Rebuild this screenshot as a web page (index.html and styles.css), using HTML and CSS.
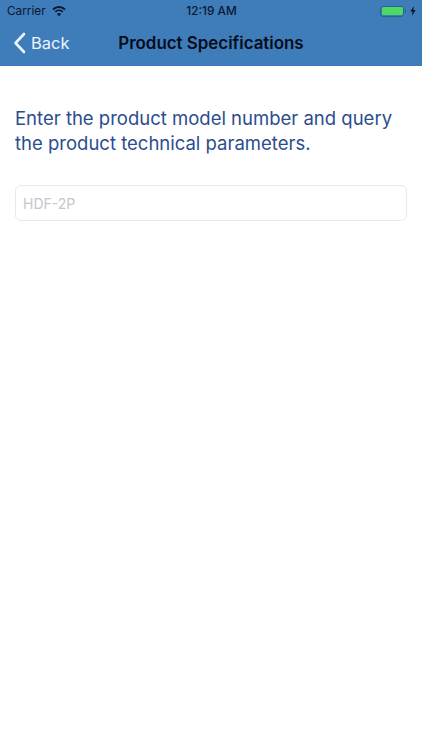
FILE: index.html
```html
<!DOCTYPE html>
<html lang="en">
<head>
<meta charset="utf-8">
<title>Product Specifications</title>
<link rel="stylesheet" href="styles.css">
</head>
<body>
<header class="topbar">
  <div class="status">
    <div class="status-left">
      <span>Carrier</span>
      <svg class="wifi" viewBox="0 0 14 10.500" width="14" height="10.500"><path d="M7 10.300 4.900 8.100a3 3 0 0 1 4.200 0Z" fill="#0b1730"/><path d="M3.300 5.900a5.300 5.300 0 0 1 7.400 0M1 3.500a8.500 8.500 0 0 1 12 0" fill="none" stroke="#0b1730" stroke-width="1.900"/></svg>
    </div>
    <div class="status-time">12:19 AM</div>
    <div class="status-right">
      <div class="battery"><div class="battery-fill"></div></div>
      <div class="battery-tip"></div>
      <svg class="bolt" viewBox="0 0 6 10" width="6" height="10"><path d="M3.800 0 .4 5.600h2.100L2 10l3.600-6H3.400Z" fill="#0b1730"/></svg>
    </div>
  </div>
  <nav class="nav">
    <a class="back">
      <svg class="chevron" viewBox="0 0 13 22" width="13" height="22"><path d="M11 2 2.500 11l8.500 9" fill="none" stroke="#eef4fb" stroke-width="2.600" stroke-linecap="round" stroke-linejoin="round"/></svg>
      <span>Back</span>
    </a>
    <h1 class="title">Product Specifications</h1>
  </nav>
</header>
<main class="content">
  <p class="intro">Enter the product model number and query the product technical parameters.</p>
  <input class="model" type="text" placeholder="HDF-2P">
</main>
</body>
</html>
```
FILE: styles.css
```css
* { box-sizing: border-box; }
html, body { margin: 0; height: 100%; background: #fff; }
body { font-family: Inter, "Liberation Sans", sans-serif; overflow: hidden; }

.topbar { height: 66px; background: #3f7dba; display: flex; flex-direction: column; }

.status { height: 22px; padding: 0 6px 0 7px; display: grid; grid-template-columns: 1fr auto 1fr; align-items: center; font-size: 11.800px; color: #0b1730; }
.status-left { display: flex; align-items: center; gap: 6px; }
.status-time { font-weight: 500; }
.status-right { display: flex; align-items: center; justify-content: flex-end; }
.wifi { display: block; }
.battery { width: 24px; height: 11px; border: 1px solid #2b6390; border-radius: 3px; padding: .5px; }
.battery-fill { height: 100%; background: #4cd964; border-radius: 1.500px; }
.battery-tip { width: 1.500px; height: 4px; background: #2b6390; margin: 0 4px 0 .5px; }
.bolt { display: block; }

.nav { height: 44px; padding-bottom: 2px; position: relative; display: flex; align-items: center; justify-content: center; }
.back { position: absolute; left: 13px; top: 0; height: 42px; display: flex; align-items: center; gap: 5px; color: #eef4fb; font-size: 16.500px; }
.chevron { display: block; }
.title { margin: 0; font-size: 16.900px; font-weight: 600; color: #050d1c; }

.content { padding: 40px 15px 0; }
.intro { margin: 0; font-size: 18.500px; line-height: 24.500px; color: #2b4d8e; }
.model { display: block; width: 100%; height: 36px; margin-top: 30px; padding: 0 7px; border: 1px solid #e9e9ec; border-radius: 6px; background: #fff; font: inherit; font-size: 14px; outline: none; }
.model::placeholder { color: #c6c6cb; opacity: 1; }
```
